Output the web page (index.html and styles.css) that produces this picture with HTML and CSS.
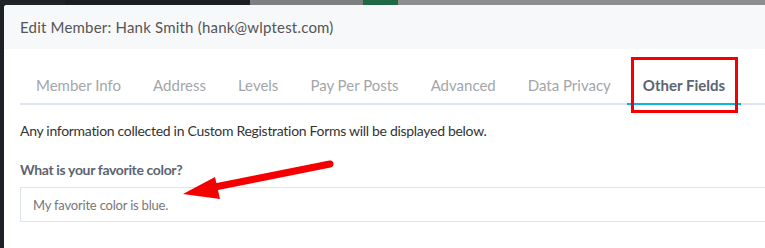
FILE: index.html
```html
<!DOCTYPE html>
<html lang="en">
<head>
  <meta charset="UTF-8">
  <title>Edit Member</title>
  <link rel="stylesheet" href="styles.css">
</head>
<body>
  <!-- 背景の管理画面（一部だけ見える） -->
  <div class="backdrop">
    <div class="strip">
      <span class="seg seg-side"></span>
      <span class="seg seg-menu"></span>
      <span class="seg seg-title"></span>
      <span class="seg seg-add"></span>
      <span class="seg seg-search"></span>
    </div>

    <!-- モーダル -->
    <div class="modal">
      <div class="modal-header">
        <h1 class="modal-title">Edit Member: Hank Smith (hank@wlptest.com)</h1>
      </div>

      <div class="modal-body">
        <ul class="tabs">
          <li class="tab">Member Info</li>
          <li class="tab">Address</li>
          <li class="tab">Levels</li>
          <li class="tab">Pay Per Posts</li>
          <li class="tab">Advanced</li>
          <li class="tab">Data Privacy</li>
          <li class="tab active">Other Fields</li>
        </ul>

        <p class="intro">Any information collected in Custom Registration Forms will be displayed below.</p>

        <label class="field-label">What is your favorite color?</label>
        <div class="field-value">My favorite color is blue.</div>
      </div>
    </div>
  </div>

  <!-- 注釈（赤枠と矢印） -->
  <div class="mark-box"></div>
  <svg class="mark-arrow" viewBox="0 0 765 248" width="765" height="248">
    <line x1="330" y1="164" x2="210" y2="188" stroke="#f50000" stroke-width="7" stroke-linecap="round"></line>
    <polygon points="183,194 215,177 220,199" fill="#f50000"></polygon>
  </svg>
</body>
</html>
```

FILE: styles.css
```css
/* Reset */
* { margin: 0; padding: 0; box-sizing: border-box; }

html, body {
  width: 765px;
  height: 248px;
  overflow: hidden;
  background: #1d2126;
  font-family: Lato, "Liberation Sans", sans-serif;
}

.backdrop {
  position: relative;
  height: 100%;
}

/* 背景の上端 */
.strip {
  display: flex;
  height: 5px;
}

.seg { display: block; height: 100%; }
.seg-side { width: 65px; background: #202327; }
.seg-menu { width: 185px; background: #1b1e23; }
.seg-title { width: 113px; background: #7d7f81; }
.seg-add { width: 35px; background: #1f6a45; }
.seg-search { flex: 1; background: #8e8e8e; }

/* モーダル */
.modal {
  margin-left: 4px;
  width: 820px;
  background: #fff;
  height: 243px;
  border-top-left-radius: 3px;
}

.modal-header {
  height: 44px;
  background: #f7f8fa;
  display: flex;
  align-items: center;
  padding-left: 16px;
  border-top-left-radius: 3px;
}

.modal-title {
  font-size: 15px;
  font-weight: normal;
  letter-spacing: 0.2px;
  color: #555;
  white-space: nowrap;
}

.modal-body {
  padding: 10px 16px 0;
}

/* タブ */
.tabs {
  display: flex;
  list-style: none;
  border-bottom: 2px solid #dde4ee;
  width: 750px;
}

.tab {
  padding: 16px 16px 8px;
  font-size: 15px;
  line-height: 20px;
  color: #a3a6a9;
  white-space: nowrap;
}

.tab.active {
  color: #5c6470;
  font-weight: bold;
  border-bottom: 2px solid #0ab4e6;
  margin-bottom: -2px;
}

/* 説明 */
.intro {
  margin-top: 16px;
  font-size: 14px;
  line-height: 20px;
  letter-spacing: -0.3px;
  color: #333;
}

.field-label {
  display: block;
  margin-top: 19px;
  font-size: 14px;
  line-height: 20px;
  letter-spacing: -0.35px;
  font-weight: bold;
  color: #5d6470;
}

.field-value {
  margin-top: 7px;
  height: 35px;
  border: 1px solid #dde4ee;
  padding: 0 12px;
  display: flex;
  align-items: center;
  font-size: 13px;
  letter-spacing: -0.2px;
  color: #777;
}

/* 注釈 */
.mark-box {
  position: absolute;
  left: 631px;
  top: 57px;
  width: 107px;
  height: 56px;
  border: 3px solid #f50000;
}

.mark-arrow {
  position: absolute;
  left: 0;
  top: 0;
  pointer-events: none;
}
```
